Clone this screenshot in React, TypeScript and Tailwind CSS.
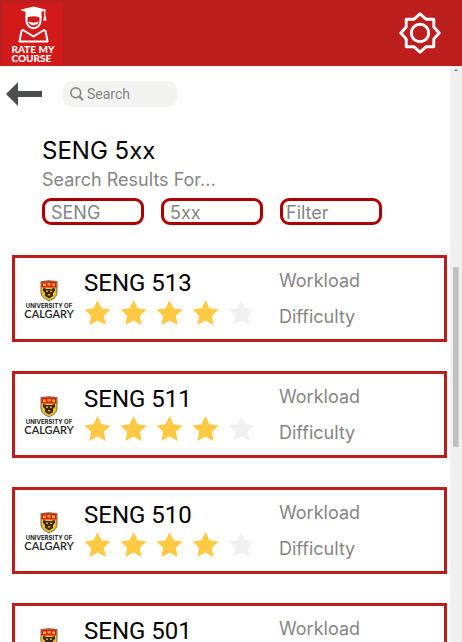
interface Course {
  name: string
  rating: number
}

const courses: Course[] = [
  { name: 'SENG 513', rating: 4 },
  { name: 'SENG 511', rating: 4 },
  { name: 'SENG 510', rating: 4 },
  { name: 'SENG 501', rating: 4 },
]

function BrandLogo() {
  return (
    <a href="#" className="mt-[3px] ml-[3px] flex h-[63px] w-[60px] flex-col items-center bg-[#d21a1a] text-white">
      <svg viewBox="0 0 60 42" className="h-[42px] w-full shrink-0" fill="none" stroke="white">
        <path d="M30.500 4 42.500 7 30.500 11 18.500 7Z" fill="white" strokeLinejoin="round" />
        <path d="M22.500 8H38.500v7.500c-5-3-11-3-16 0z" fill="white" stroke="none" />
        <path d="M41.800 7v7" strokeWidth="1.200" />
        <path d="M41 13.500h1.800l.7 4h-3.200z" fill="white" stroke="none" />
        <path d="M23.500 13v5a7 7.200 0 0 0 14 0V13" strokeWidth="2" />
        <path d="M25.500 18.500c3 1.500 7 1.500 10 0-.5 5-9.500 5-10 0z" fill="white" stroke="none" />
        <path d="M20 27 30.500 33.500 41 27 42.500 28 44.500 38.500H16.500L18.500 28z" strokeWidth="2" strokeLinejoin="round" />
      </svg>
      <span className="font-['Lato',sans-serif] text-[10px] leading-[9px] font-black">
        RATE MY
        <br />
        COURSE
      </span>
    </a>
  )
}

function SettingsIcon() {
  return (
    <svg viewBox="0 0 42 42" className="size-[42px]" fill="none" stroke="white" strokeWidth="2.900">
      <path d="M21 1.800 27 7.200H34.800V15L40.200 21l-5.400 6v7.800H27L21 40.200l-6-5.400H7.200V27L1.800 21l5.400-6V7.200H15z" strokeLinejoin="round" />
      <circle cx="21" cy="21" r="8.700" />
    </svg>
  )
}

function UniversityLogo() {
  return (
    <div className="mt-[22px] flex w-12 shrink-0 flex-col items-center text-[#222]">
      <svg viewBox="0 0 18 22" className="h-[22px] w-[18px]">
        <path d="M1 1.500Q9 0 17 1.500V12c0 4.500-4 7-8 9C5 19 1 16.500 1 12z" fill="#f5c21c" stroke="#6b6560" />
        <path d="M1.500 2Q9 .5 16.500 2v5.500h-15z" fill="#d6201f" />
        <path d="M3 3.500h3v2.500H3zM7.500 3h3v2.500h-3zM12 3.500h3v2.500h-3z" fill="#e9ad26" />
        <path d="M3.500 7.500 6 9h6l2.500-1.500.7 3-2.200 2.500v3L9 18.500 5 16v-3l-2.200-2.500z" fill="#3b2719" />
        <path d="M6 10.500h2V12H6zM10 10.500h2V12h-2zM7.800 14h2.400v1.500H7.800z" fill="#e9ad26" />
      </svg>
      <span className="font-['Inter',sans-serif] text-[6px] leading-[7px] font-bold whitespace-nowrap">UNIVERSITY OF</span>
      <span className="font-['Lato',sans-serif] text-[11px] leading-[9px] font-semibold whitespace-nowrap">CALGARY</span>
    </div>
  )
}

function Stars({ rating }: { rating: number }) {
  return (
    <div className="mt-px flex gap-[9px]" role="img" aria-label={`${rating} out of 5`}>
      {[1, 2, 3, 4, 5].map((n) => (
        <svg key={n} viewBox="0 0 27 27" className={`size-[27px] ${n <= rating ? 'text-[#ffc943]' : 'text-[#f1f1f1]'}`}>
          <path
            d="M13.500 1l4 8.300 9.100 1.200-6.700 6.300 1.700 9.100-8.100-4.400-8.100 4.400 1.700-9.100L.4 10.500l9.100-1.200z"
            fill="currentColor"
          />
        </svg>
      ))}
    </div>
  )
}

function CourseCard({ course }: { course: Course }) {
  return (
    <li className="flex h-[87px] border-3 border-[#bb1c1c] pl-[10px]">
      <UniversityLogo />
      <div className="ml-[11px] w-[195px] pt-[10px]">
        <h2 className="font-['Roboto',sans-serif] text-2xl leading-[30px] text-black">{course.name}</h2>
        <Stars rating={course.rating} />
      </div>
      <div className="flex flex-col gap-3 pt-[11px] text-lg leading-6 text-[#858585]">
        <span>Workload</span>
        <span>Difficulty</span>
      </div>
    </li>
  )
}

export default function App() {
  return (
    <div className="flex h-screen flex-col overflow-hidden bg-white font-['Inter',sans-serif]">
      <header className="flex h-[66px] shrink-0 items-center justify-between bg-[#bb1e1c] pr-[21px]">
        <BrandLogo />
        <button type="button" aria-label="Settings">
          <SettingsIcon />
        </button>
      </header>

      <div className="flex min-h-0 flex-1">
        <main className="min-w-0 flex-1 overflow-hidden pr-[3px]">
          <div className="flex items-center gap-[21px] pt-[15px] pl-[6px]">
            <button type="button" aria-label="Back">
              <svg viewBox="0 0 36 24" className="h-6 w-9" fill="#4d4e52">
                <path d="M0 12 12 0v9h24v6H12v9z" />
              </svg>
            </button>
            <label className="flex h-[26px] w-[114px] items-center gap-[3px] rounded-[9px] bg-[#f3f3f2] pl-[7px] text-[#858585]">
              <svg viewBox="0 0 14 14" className="size-[14px] shrink-0" fill="none" stroke="currentColor" strokeWidth="1.600">
                <circle cx="5.800" cy="5.800" r="4.900" />
                <path d="M9.200 9.200 13 13.300" strokeWidth="2" />
              </svg>
              <input
                type="search"
                placeholder="Search"
                aria-label="Search"
                className="w-full min-w-0 bg-transparent font-['Roboto',sans-serif] text-sm outline-none placeholder:text-[#858585]"
              />
            </label>
          </div>

          <section className="mt-7 pl-[42px] text-[#858585]">
            <h1 className="text-2xl leading-8 text-black">SENG 5xx</h1>
            <p className="text-lg leading-[26px]">Search Results For...</p>
            <form className="mt-[5px] flex gap-[17px]">
              <input
                aria-label="Subject"
                defaultValue="SENG"
                className="h-[27px] w-[102px] rounded-[9px] border-3 border-[#ad0003] pt-[2px] pl-[6px] text-lg leading-5 outline-none"
              />
              <input
                aria-label="Course number"
                defaultValue="5xx"
                className="h-[27px] w-[102px] rounded-[9px] border-3 border-[#ad0003] pt-[2px] pl-[6px] text-lg leading-5 outline-none"
              />
              <button
                type="button"
                className="h-[27px] w-[102px] rounded-[9px] border-3 border-[#ad0003] pt-[2px] pl-[3px] text-left text-lg leading-5"
              >
                Filter
              </button>
            </form>
          </section>

          <ul className="mt-[30px] flex flex-col gap-[29px] pl-3">
            {courses.map((course) => (
              <CourseCard key={course.name} course={course} />
            ))}
          </ul>
        </main>

        {/* Scroll track */}
        <div className="flex w-3 shrink-0 flex-col bg-[#f0f0f0] pl-[3px]">
          <svg viewBox="0 0 6 3" className="mt-[3px] h-[3px] w-[6px]" fill="#777">
            <path d="M3 0l2 2H1z" />
          </svg>
          <div className="mt-[195px] h-[180px] w-[6px] border-r border-[#d2d2d2] bg-[#c1c1c1]"></div>
        </div>
      </div>
    </div>
  )
}
